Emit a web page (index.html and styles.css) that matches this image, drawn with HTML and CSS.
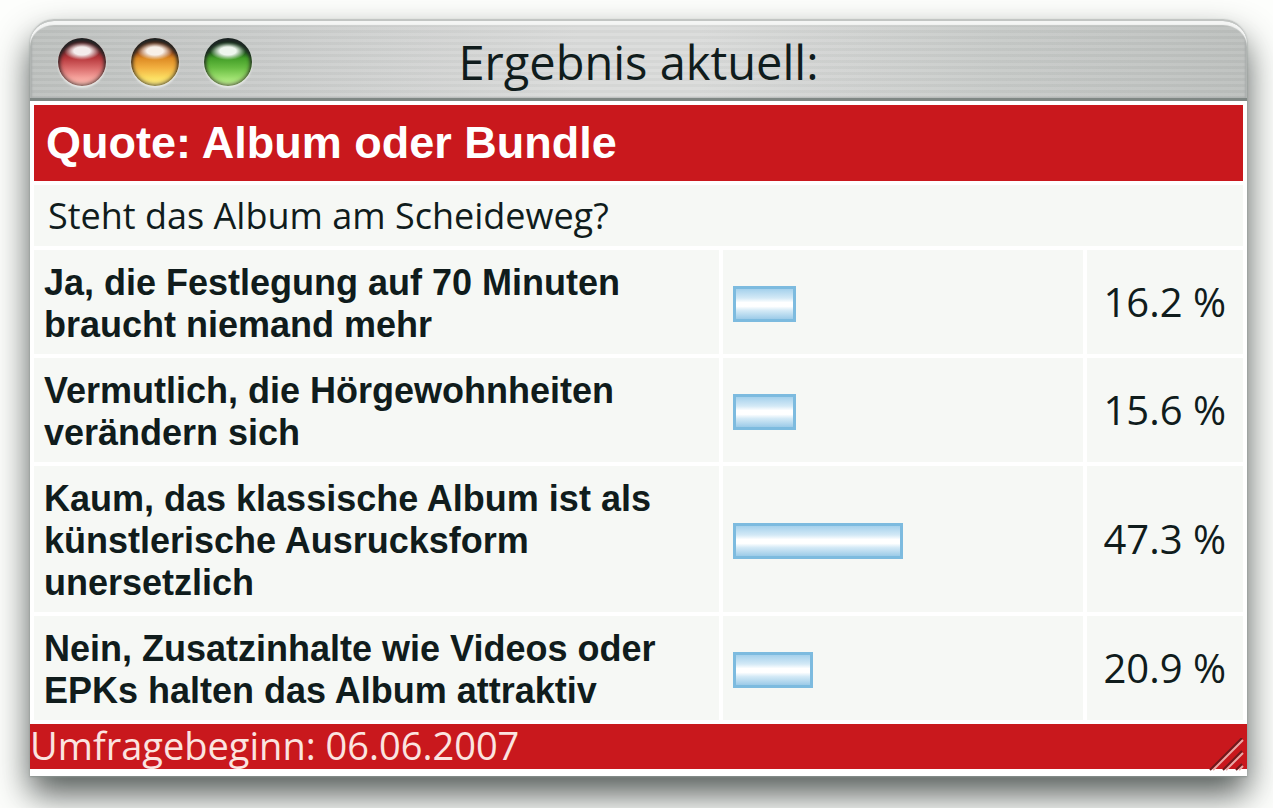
FILE: index.html
```html
<!DOCTYPE html>
<html lang="de">
<head>
    <meta charset="UTF-8">
    <title>Ergebnis aktuell:</title>
    <link rel="stylesheet" href="styles.css">
</head>
<body>
    <div class="window">
        <!--Titelleiste-->
        <div class="titlebar">
            <div class="lights">
                <button class="light red" type="button" aria-label="Schließen"></button>
                <button class="light yellow" type="button" aria-label="Minimieren"></button>
                <button class="light green" type="button" aria-label="Vergrößern"></button>
            </div>
            <h1 class="title">Ergebnis aktuell:</h1>
        </div>

        <!--Ergebnis der Umfrage-->
        <table class="poll">
            <colgroup>
                <col class="col-answer">
                <col class="col-bar">
                <col class="col-percent">
            </colgroup>
            <tr>
                <th class="poll-title" colspan="3">Quote: Album oder Bundle</th>
            </tr>
            <tr>
                <td class="question" colspan="3">Steht das Album am Scheideweg?</td>
            </tr>
            <tr>
                <th class="answer">Ja, die Festlegung auf 70 Minuten<br>braucht niemand mehr</th>
                <td><div class="bar" style="width: 18.4%"></div></td>
                <td class="percent">16.2 %</td>
            </tr>
            <tr>
                <th class="answer">Vermutlich, die Hörgewohnheiten<br>verändern sich</th>
                <td><div class="bar" style="width: 18.4%"></div></td>
                <td class="percent">15.6 %</td>
            </tr>
            <tr>
                <th class="answer">Kaum, das klassische Album ist als<br>künstlerische Ausrucksform<br>unersetzlich</th>
                <td><div class="bar" style="width: 50%"></div></td>
                <td class="percent">47.3 %</td>
            </tr>
            <tr>
                <th class="answer">Nein, Zusatzinhalte wie Videos oder<br>EPKs halten das Album attraktiv</th>
                <td><div class="bar" style="width: 23.6%"></div></td>
                <td class="percent">20.9 %</td>
            </tr>
        </table>

        <div class="footer">Umfragebeginn: 06.06.2007</div>
        <svg class="grip" width="38" height="34" viewBox="0 0 38 34" fill="none" stroke-width="2">
            <path stroke="#6e1a1c" d="M1 32L33 0M14 32L33 13M27 32L33 26"/>
            <path stroke="#e9a9a6" d="M4 32L34 2M17 32L34 15M30 32L34 28"/>
        </svg>
    </div>
</body>
</html>
```

FILE: styles.css
```css
body {
    margin: 0;
    background: #fdfefc;
    overflow: hidden;
    color: #101c1c;
    font-family: "Open Sans", "Noto Sans", sans-serif;
}

.window {
    position: relative;
    margin: 19px 26px 32px 30px;
    padding-bottom: 7px;
    background: #fff;
    border-radius: 24px 24px 0 0;
    box-shadow: 0 1px 2px #8b9390, 0 18px 34px rgba(40, 48, 45, 0.8);
}

/*Titelleiste*/
.titlebar {
    box-sizing: border-box;
    height: 82px;
    display: grid;
    grid-template-columns: 1fr auto 1fr;
    align-items: center;
    padding: 4px 28px 0;
    border-top: 2px solid #c2c5c3;
    border-bottom: 3px solid #7f8784;
    border-radius: 24px 24px 0 0;
    background:
        repeating-linear-gradient(rgba(255, 255, 255, 0.08) 0 3px, rgba(90, 100, 96, 0.03) 3px 6px),
        linear-gradient(90deg, #bcbfbd, #c9cbca 20%, #d9dad9 45%, #d9dad9 55%, #c6c9c7 80%, #bbbebc);
    box-shadow: inset 0 4px 1px #f4f5f4, inset 2px 0 2px #a9adab, inset -2px 0 2px #a9adab;
}

.lights {
    display: flex;
    gap: 25px;
}

.light {
    width: 48px;
    height: 48px;
    padding: 0;
    border: 0;
    border-radius: 50%;
    box-shadow: inset 0 4px 4px #1d2425, inset 0 0 4px 1px rgba(40, 30, 30, 0.8), 0 2px 2px #e6e8e6;
}

.red {
    background:
        radial-gradient(ellipse 18px 9px at 50% 27%, #f4ecec 45%, rgba(255, 255, 255, 0)),
        linear-gradient(#5c2024 0, #8c2c30 30%, #b8393d 42%, #d96a6a 62%, #f4a09a 82%, #ffc4b8);
}

.yellow {
    background:
        radial-gradient(ellipse 18px 9px at 50% 27%, #f8f0e8 45%, rgba(255, 255, 255, 0)),
        linear-gradient(#5f2b14 0, #a2501c 30%, #dd8a24 42%, #f2b040 62%, #fbdc60 82%, #fff38a);
}

.green {
    background:
        radial-gradient(ellipse 18px 9px at 50% 27%, #eef6ee 45%, rgba(255, 255, 255, 0)),
        linear-gradient(#12301a 0, #235f1f 30%, #439e28 42%, #68bd42 62%, #9ade6c 82%, #c8f79a);
}

.title {
    margin: 0;
    font-size: 47px;
    line-height: 60px;
    font-weight: normal;
}

/*Tabelle*/
.poll {
    width: 100%;
    table-layout: fixed;
    border-spacing: 4px;
}

.col-bar {
    width: 360px;
}

.col-percent {
    width: 156px;
}

.poll th,
.poll td {
    padding: 12px 10px 8px;
    background: #f6f8f5;
    text-align: left;
}

.poll .poll-title {
    padding: 14px 12px;
    background: #c9181d;
    color: #fff;
    font: bold 45px/48px "Liberation Sans", Arial, sans-serif;
}

.poll .question {
    padding: 9px 14px 8px;
    font-size: 36px;
    line-height: 44px;
}

.answer {
    font: bold 36px/42px "Liberation Sans", Arial, sans-serif;
}

.bar {
    box-sizing: border-box;
    height: 36px;
    border: 3px solid #7dbbdf;
    background: linear-gradient(#a5d1ec, #d3e9f6 30%, #fff 45%, #fff 58%, #d3e9f6 72%, #9ccbe8);
}

.poll .percent {
    padding: 10px 17px 10px 0;
    font-size: 40px;
    line-height: 44px;
    text-align: right;
    white-space: nowrap;
}

.footer {
    height: 45px;
    background: #c9181d;
    color: #fbe4e0;
    font-size: 38px;
    line-height: 42px;
}

.grip {
    position: absolute;
    right: 0;
    bottom: 4px;
}
```
